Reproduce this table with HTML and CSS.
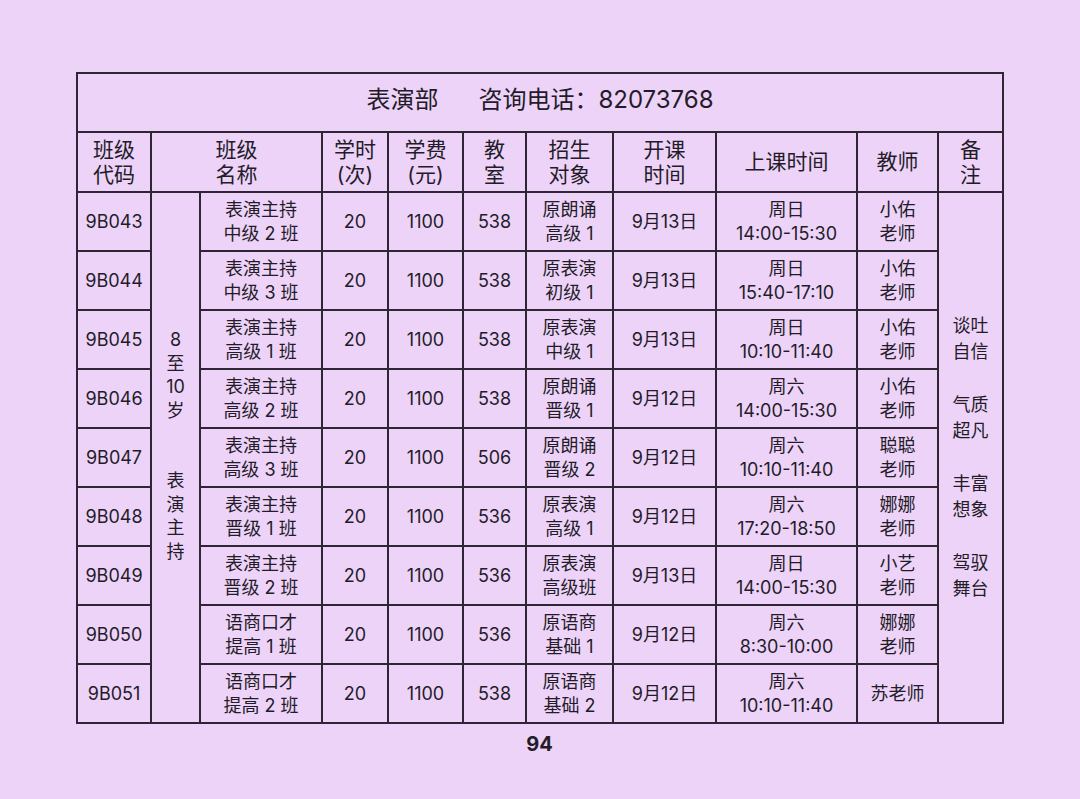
FILE: index.html
```html
<!DOCTYPE html>
<html lang="zh">
<head>
<meta charset="utf-8">
<link rel="stylesheet" href="styles.css">
</head>
<body>
<div class="page">
<table class="sched">
<colgroup>
<col class="c1"><col class="c2"><col class="c3"><col class="c4"><col class="c5"><col class="c6"><col class="c7"><col class="c8"><col class="c9"><col class="c10"><col class="c11">
</colgroup>
<tr class="title-row"><td colspan="11" class="title">表演部<span class="gap"></span>咨询电话：82073768</td></tr>
<tr class="head-row">
<th>班级<br>代码</th>
<th colspan="2">班级<br>名称</th>
<th>学时<br>(次)</th>
<th>学费<br>(元)</th>
<th>教<br>室</th>
<th>招生<br>对象</th>
<th>开课<br>时间</th>
<th>上课时间</th>
<th>教师</th>
<th>备<br>注</th>
</tr>
<tr>
<td>9B043</td>
<td rowspan="9" class="age">8<br>至<br>10<br>岁<br><br><br>表<br>演<br>主<br>持</td>
<td>表演主持<br>中级 2 班</td><td>20</td><td>1100</td><td>538</td><td>原朗诵<br>高级 1</td><td>9月13日</td><td>周日<br>14:00-15:30</td><td>小佑<br>老师</td>
<td rowspan="9" class="note">谈吐<br>自信<br><br>气质<br>超凡<br><br>丰富<br>想象<br><br>驾驭<br>舞台</td>
</tr>
<tr><td>9B044</td><td>表演主持<br>中级 3 班</td><td>20</td><td>1100</td><td>538</td><td>原表演<br>初级 1</td><td>9月13日</td><td>周日<br>15:40-17:10</td><td>小佑<br>老师</td></tr>
<tr><td>9B045</td><td>表演主持<br>高级 1 班</td><td>20</td><td>1100</td><td>538</td><td>原表演<br>中级 1</td><td>9月13日</td><td>周日<br>10:10-11:40</td><td>小佑<br>老师</td></tr>
<tr><td>9B046</td><td>表演主持<br>高级 2 班</td><td>20</td><td>1100</td><td>538</td><td>原朗诵<br>晋级 1</td><td>9月12日</td><td>周六<br>14:00-15:30</td><td>小佑<br>老师</td></tr>
<tr><td>9B047</td><td>表演主持<br>高级 3 班</td><td>20</td><td>1100</td><td>506</td><td>原朗诵<br>晋级 2</td><td>9月12日</td><td>周六<br>10:10-11:40</td><td>聪聪<br>老师</td></tr>
<tr><td>9B048</td><td>表演主持<br>晋级 1 班</td><td>20</td><td>1100</td><td>536</td><td>原表演<br>高级 1</td><td>9月12日</td><td>周六<br>17:20-18:50</td><td>娜娜<br>老师</td></tr>
<tr><td>9B049</td><td>表演主持<br>晋级 2 班</td><td>20</td><td>1100</td><td>536</td><td>原表演<br>高级班</td><td>9月13日</td><td>周日<br>14:00-15:30</td><td>小艺<br>老师</td></tr>
<tr><td>9B050</td><td>语商口才<br>提高 1 班</td><td>20</td><td>1100</td><td>536</td><td>原语商<br>基础 1</td><td>9月12日</td><td>周六<br>8:30-10:00</td><td>娜娜<br>老师</td></tr>
<tr><td>9B051</td><td>语商口才<br>提高 2 班</td><td>20</td><td>1100</td><td>538</td><td>原语商<br>基础 2</td><td>9月12日</td><td>周六<br>10:10-11:40</td><td>苏老师</td></tr>
</table>
<div class="pagenum">94</div>
</div>
</body>
</html>
```
FILE: styles.css
```css
html, body {
  margin: 0;
  padding: 0;
  background: #edd3f8;
}
body {
  font-family: "Inter", "Noto Sans CJK SC", sans-serif;
  color: #231c28;
  width: 1080px;
  height: 799px;
  overflow: hidden;
}
.page {
  padding: 72px 0 0 76px;
}
.sched {
  border-collapse: collapse;
  table-layout: fixed;
  width: 927px;
}
.c1 { width: 74px; }
.c2 { width: 49px; }
.c3 { width: 122px; }
.c4 { width: 66px; }
.c5 { width: 75px; }
.c6 { width: 63px; }
.c7 { width: 87px; }
.c8 { width: 103px; }
.c9 { width: 141px; }
.c10 { width: 81px; }
.c11 { width: 65px; }
.sched td, .sched th {
  border: 2px solid #2e2535;
  padding: 0;
  text-align: center;
  vertical-align: middle;
  font-weight: normal;
  font-size: 18px;
  line-height: 24px;
  height: 57px;
}
.sched .title {
  font-size: 24px;
  line-height: 30px;
  height: 52px;
  padding-bottom: 5px;
}
.gap {
  display: inline-block;
  width: 40px;
}
.sched th {
  font-size: 21px;
  line-height: 25.5px;
  height: 58px;
}
.sched .age {
  line-height: 23.5px;
  padding-bottom: 24px;
}
.sched .note {
  line-height: 26.3px;
}
.pagenum {
  width: 927px;
  text-align: center;
  font-weight: bold;
  font-size: 20px;
  line-height: 28px;
  margin-top: 6px;
}
```
